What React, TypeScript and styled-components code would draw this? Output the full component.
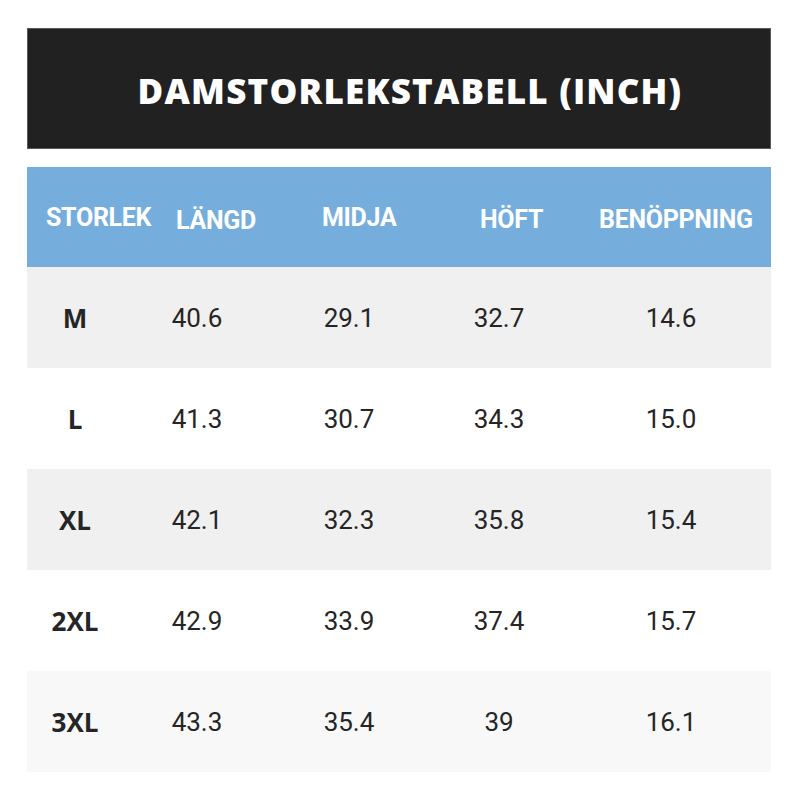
import React from "react";
import styled, { createGlobalStyle } from "styled-components";

const GlobalStyle = createGlobalStyle`
  html, body {
    margin: 0;
    padding: 0;
    background: #ffffff;
  }
  body {
    font-family: Roboto, "Liberation Sans", sans-serif;
  }
`;

const Page = styled.div`
  width: 800px;
  height: 800px;
  padding: 28px 29px 0 27px;
  box-sizing: border-box;
  display: flex;
  flex-direction: column;
`;

const Banner = styled.h1`
  margin: 0 0 18px;
  height: 121px;
  background: #212121;
  box-shadow: inset 0 0 0 1px #5a5a5a;
  display: flex;
  align-items: center;
  justify-content: center;
  padding: 3px 0 0 22px;
  box-sizing: border-box;
  color: #ffffff;
  font-family: "Open Sans", "Liberation Sans", sans-serif;
  font-weight: 800;
  font-size: 35px;
  letter-spacing: 1.2px;
`;

const Table = styled.div`
  display: flex;
  flex-direction: column;
`;

const HeadRow = styled.div`
  height: 100px;
  background: #75aedc;
  display: grid;
  grid-template-columns: 130px 146px 158px 119px 1fr;
  align-items: center;
  padding-left: 19px;
`;

const HeadCell = styled.div<{ $drop?: number }>`
  color: #ffffff;
  font-family: Roboto, "Liberation Sans", sans-serif;
  font-weight: 700;
  font-size: 25px;
  letter-spacing: -0.3px;
  white-space: nowrap;
  transform: translateY(${(p) => p.$drop ?? 0}px);
`;

const Row = styled.div<{ $bg: string }>`
  height: 101px;
  background: ${(p) => p.$bg};
  display: grid;
  grid-template-columns: 96px 148px 156px 144px 1fr;
  align-items: center;
  text-align: center;
  color: #252525;
`;

const SizeCell = styled.div`
  font-family: "Open Sans", "Liberation Sans", sans-serif;
  font-weight: 700;
  font-size: 26px;
`;

const ValueCell = styled.div`
  font-family: Roboto, "Liberation Sans", sans-serif;
  font-size: 26px;
`;

const headers: { label: string; drop?: number }[] = [
  { label: "STORLEK" },
  { label: "LÄNGD", drop: 3 },
  { label: "MIDJA" },
  { label: "HÖFT", drop: 2 },
  { label: "BENÖPPNING", drop: 2 },
];

const rows = [
  { size: "M", bg: "#f0f0f0", values: ["40.6", "29.1", "32.7", "14.6"] },
  { size: "L", bg: "#ffffff", values: ["41.3", "30.7", "34.3", "15.0"] },
  { size: "XL", bg: "#f0f0f0", values: ["42.1", "32.3", "35.8", "15.4"] },
  { size: "2XL", bg: "#ffffff", values: ["42.9", "33.9", "37.4", "15.7"] },
  { size: "3XL", bg: "#f8f8f8", values: ["43.3", "35.4", "39", "16.1"] },
];

export default function App() {
  return (
    <>
      <GlobalStyle />
      <Page>
        <Banner>DAMSTORLEKSTABELL (INCH)</Banner>
        <Table>
          <HeadRow>
            {headers.map((h) => (
              <HeadCell key={h.label} $drop={h.drop}>
                {h.label}
              </HeadCell>
            ))}
          </HeadRow>
          {rows.map((r) => (
            <Row key={r.size} $bg={r.bg}>
              <SizeCell>{r.size}</SizeCell>
              {r.values.map((v, i) => (
                <ValueCell key={i}>{v}</ValueCell>
              ))}
            </Row>
          ))}
        </Table>
      </Page>
    </>
  );
}
